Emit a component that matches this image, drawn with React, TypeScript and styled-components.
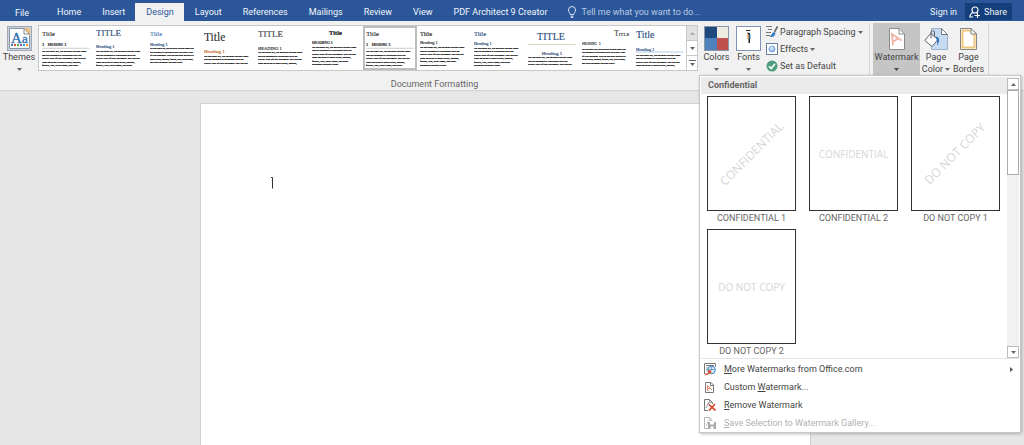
import React from "react";
import styled, { createGlobalStyle, css } from "styled-components";

const GlobalStyle = createGlobalStyle`
  * { box-sizing: border-box; }
  html, body, #root { height: 100%; }
  body {
    margin: 0;
    background: #e6e6e6;
    font-family: Roboto, "Open Sans", sans-serif;
    font-size: 9px;
    line-height: 12px;
    color: #444;
  }
  button { font: inherit; color: inherit; background: none; border: 0; padding: 0; margin: 0; }
  svg { display: block; flex: none; }
`;

const Window = styled.div`
  display: flex;
  flex-direction: column;
  min-height: 100%;
`;

/* ---------- tab strip ---------- */

const TabStrip = styled.nav`
  display: flex;
  align-items: flex-end;
  height: 21px;
  padding-right: 12px;
  background: #2b579a;
  color: #f2f5fa;
`;

const Tab = styled.button<{ $active?: boolean }>`
  height: 18px;
  padding: 0 10px 1px 11px;
  white-space: nowrap;
  ${(p) => p.$active && css`
    background: #f1f1f1;
    color: #2b579a;
  `}
`;

const FileTab = styled(Tab)`
  width: 46px;
  padding: 1px 2px 0 0;
`;

const TellMe = styled.label`
  display: flex;
  flex: 1;
  align-items: center;
  gap: 4px;
  height: 18px;
  padding: 0 0 1px 10px;
  color: #b9c9e2;
`;

const TellMeInput = styled.input`
  flex: 1;
  min-width: 0;
  padding: 0;
  border: 0;
  outline: 0;
  background: none;
  font: inherit;
  color: inherit;
  &::placeholder { color: #b9c9e2; opacity: 1; }
`;

const ShareButton = styled.button`
  display: flex;
  align-items: center;
  align-self: flex-end;
  gap: 3px;
  height: 17px;
  margin-bottom: 1px;
  padding: 0 5px 0 4px;
  background: #143f7a;
`;

const SignIn = styled(Tab)`
  padding: 0 8px 1px;
`;

/* ---------- ribbon ---------- */

const Ribbon = styled.header`
  position: relative;
  display: flex;
  height: 70px;
  background: #f1f1f1;
  border-bottom: 1px solid #d2d2d2;
`;

const RibbonGroup = styled.section<{ $grow?: boolean }>`
  display: flex;
  flex-direction: column;
  flex: ${(p) => (p.$grow ? "1" : "none")};
  min-width: 0;
  padding-top: 2px;
`;

const GroupBody = styled.div`
  display: flex;
  flex: none;
  align-items: flex-start;
  height: 54px;
`;

const GroupLabel = styled.div`
  line-height: 14px;
  text-align: center;
  color: #666;
`;

const Divider = styled.div`
  width: 1px;
  height: 54px;
  margin-top: 2px;
  background: #d6d6d6;
`;

const BigButton = styled.button<{ $width: number; $pressed?: boolean }>`
  display: flex;
  flex-direction: column;
  align-items: center;
  flex: none;
  width: ${(p) => p.$width}px;
  height: 52px;
  padding-top: 3px;
  line-height: 12px;
  white-space: nowrap;
  background: ${(p) => (p.$pressed ? "#c5c5c5" : "transparent")};
`;

const Spacer = styled.div<{ $width: number }>`
  flex: none;
  width: ${(p) => p.$width}px;
`;

const IconSlot = styled.span`
  display: flex;
  align-items: center;
  height: 25px;
`;

const ArrowBox = styled.span`
  margin-top: 5px;
`;

const SmallButton = styled.button`
  display: flex;
  align-items: center;
  gap: 2px;
  height: 17px;
  white-space: nowrap;
`;

const SmallColumn = styled.div`
  display: flex;
  flex-direction: column;
  width: 107px;
  padding-left: 4px;
`;

const Gallery = styled.div`
  display: flex;
  flex: 1;
  min-width: 0;
  height: 46px;
  margin-top: 2px;
  border: 1px solid #c8c8c8;
  background: #fff;
`;

const GalleryItems = styled.div`
  display: flex;
  flex: 1;
  min-width: 0;
  overflow: hidden;
`;

const StyleThumb = styled.button<{ $selected?: boolean }>`
  display: flex;
  align-items: flex-start;
  flex: none;
  width: 54px;
  height: 44px;
  padding: 0 0 0 1px;
  border: 2px solid ${(p) => (p.$selected ? "#bdbdbd" : "transparent")};
  overflow: hidden;
`;

const GalleryScroll = styled.div`
  display: flex;
  flex-direction: column;
  flex: none;
  width: 11px;
  border-left: 1px solid #c8c8c8;
`;

const ScrollButton = styled.button<{ $muted?: boolean }>`
  display: grid;
  flex: 1;
  place-items: center;
  background: ${(p) => (p.$muted ? "#e1e1e1" : "#fff")};
  & + & { border-top: 1px solid #c8c8c8; }
`;

/* ---------- watermark menu ---------- */

const Menu = styled.div`
  position: absolute;
  z-index: 2;
  top: 54px;
  right: 3px;
  width: 322px;
  padding: 1px 1px 0;
  background: #fff;
  border: 1px solid #c6c6c6;
  box-shadow: 1px 1px 3px rgba(0, 0, 0, 0.25);
`;

const MenuGallery = styled.div`
  display: flex;
  height: 281px;
`;

const MenuScrollArea = styled.div`
  flex: 1;
  overflow: hidden;
`;

const MenuHeading = styled.h2`
  margin: 0;
  padding-left: 7px;
  font-size: 9px;
  line-height: 17px;
  font-weight: 700;
  color: #666;
  background: #ebebeb;
`;

const CardGrid = styled.div`
  display: grid;
  grid-template-columns: repeat(3, 89px);
  gap: 4px 13px;
  padding: 2px 6px;
`;

const Card = styled.button`
  display: flex;
  flex-direction: column;
  align-items: center;
  line-height: 14px;
  white-space: nowrap;
  color: #666;
`;

const Sheet = styled.span`
  display: grid;
  place-items: center;
  width: 89px;
  height: 115px;
  border: 1px solid #333;
  background: #fff;
`;

const Mark = styled.span<{ $size: number; $diagonal?: boolean }>`
  font-family: "Open Sans", sans-serif;
  font-size: ${(p) => p.$size}px;
  line-height: 16px;
  color: #d6d6d6;
  transform: ${(p) => (p.$diagonal ? "rotate(-45deg)" : "none")};
`;

const ScrollBar = styled.div`
  display: flex;
  flex-direction: column;
  width: 12px;
  padding-top: 1px;
  background: #f1f1f1;
`;

const ScrollEnd = styled.button`
  display: grid;
  place-items: center;
  height: 12px;
  border: 1px solid #bcbcbc;
  background: #fff;
`;

const ScrollThumb = styled.div`
  height: 85px;
  border: 1px solid #ababab;
  background: #fff;
`;

const ScrollTrack = styled.div`
  flex: 1;
`;

const MenuList = styled.div`
  padding: 1px 0 0;
  border-top: 1px solid #e6e6e6;
`;

const MenuItem = styled.button<{ $disabled?: boolean }>`
  display: flex;
  align-items: center;
  gap: 8px;
  width: 100%;
  height: 18px;
  padding: 0 6px 0 3px;
  color: ${(p) => (p.$disabled ? "#b1b1b1" : "#444")};
`;

const MenuText = styled.span`
  flex: 1;
  text-align: left;
`;

/* ---------- document ---------- */

const Workspace = styled.main`
  display: flex;
  flex: 1;
  justify-content: center;
  padding: 12px 14px 0 0;
`;

const Paper = styled.article`
  width: 64%;
  max-width: 611px;
  padding: 72px 70px;
  background: #fff;
  border: 1px solid #d0d0d0;
  border-bottom: 0;
`;

/* ---------- drawings ---------- */

const Arrow = ({ color = "#666" }: { color?: string }) => (
  <svg width="5" height="3" viewBox="0 0 5 3"><path d="M0 0H5L2.500 3Z" fill={color} /></svg>
);

const InlineArrow = styled.span`
  display: inline-block;
  margin-left: 2px;
  vertical-align: middle;
`;

const BulbIcon = () => (
  <svg width="10" height="12" viewBox="0 0 10 12" fill="none" stroke="#dbe4f2" strokeWidth="1">
    <path d="M3.200 8.500C3.200 6.800 1.500 6.300 1.500 4A3.500 3.500 0 0 1 8.500 4C8.500 6.300 6.800 6.800 6.800 8.500Z" />
    <path d="M3.500 10.200H6.500M4 11.500H6" />
  </svg>
);

const PersonIcon = () => (
  <svg width="12" height="12" viewBox="0 0 12 12" fill="none" stroke="#fff" strokeWidth="1.100">
    <circle cx="6" cy="4" r="3" />
    <path d="M4 6.500C2 7.300 1 8.800 .8 11H4M7.500 6.800L8 7.200M5.500 9.500H11M8.500 7V12" />
  </svg>
);

const ThemesIcon = () => (
  <svg width="25" height="25" viewBox="0 0 25 25">
    <rect x=".5" y=".5" width="24" height="24" fill="#c9d3e0" stroke="#a3a9b2" />
    <path d="M2.500 2.500H17L22.500 8V22.500H2.500Z" fill="#fff" stroke="#8795a8" />
    <path d="M16 2H23V10Z" fill="#f0c47c" />
    <path d="M17 2.500V8H22.500Z" fill="#fff" stroke="#6f6f6f" strokeWidth=".8" />
    <text x="4" y="17" fontFamily="Liberation Serif, serif" fontSize="15" fill="#2f6db0" stroke="#2f6db0" strokeWidth=".3">A</text>
    <text x="15" y="17" fontFamily="Liberation Serif, serif" fontSize="13" fill="#2f6db0" stroke="#2f6db0" strokeWidth=".3">a</text>
    <rect x="4" y="18" width="2" height="2" fill="#3b76b8" />
    <rect x="7" y="18" width="2" height="2" fill="#e0552f" />
    <rect x="10" y="18" width="2" height="2" fill="#58a65c" />
    <rect x="13" y="18" width="2" height="2" fill="#8a58b0" />
    <rect x="16" y="18" width="2" height="2" fill="#2fa3c4" />
    <rect x="19" y="18" width="2" height="2" fill="#f09a35" />
  </svg>
);

const ColorsIcon = () => (
  <svg width="25" height="25" viewBox="0 0 25 25">
    <path d="M0 0H13V12H0Z" fill="#1f497d" />
    <path d="M13 0H25V12H13Z" fill="#eeece1" />
    <path d="M0 12H13V25H0Z" fill="#4f81bd" />
    <path d="M13 12H25V25H13Z" fill="#c0504d" />
    <rect x=".5" y=".5" width="24" height="24" fill="none" stroke="#8a97a8" />
  </svg>
);

const FontsIcon = () => (
  <svg width="25" height="25" viewBox="0 0 25 25">
    <rect x=".5" y=".5" width="24" height="24" fill="#fff" stroke="#7f93b2" />
    <path d="M10 4.500H14.500" stroke="#333" />
    <path d="M11 6.500L14 7V17H12.500V9Z" fill="#222" />
    <path d="M12 8V13" stroke="#e08a2c" />
    <path d="M14 8V13" stroke="#3a87c8" />
  </svg>
);

const ParagraphIcon = () => (
  <svg width="12" height="13" viewBox="0 0 12 13">
    <path d="M0 1.500H6M2 4.500H6M0 7.500H5M0 10.500H4" stroke="#777" />
    <path d="M11.500 1.500L8.500 7" stroke="#666" strokeWidth="1.600" />
    <path d="M8.500 7C6 7 6 10 3.500 11.500C6.500 13 9.800 11 9.300 8Z" fill="#3d7fc0" />
  </svg>
);

const EffectsIcon = () => (
  <svg width="12" height="12" viewBox="0 0 12 12">
    <rect x=".5" y=".5" width="11" height="11" fill="#fff" stroke="#6b7f9e" />
    <circle cx="6" cy="6" r="3" fill="#a9c7ee" stroke="#5b8fd0" strokeWidth=".8" />
    <circle cx="5.500" cy="5" r="1.400" fill="#dceaff" />
  </svg>
);

const CheckIcon = () => (
  <svg width="12" height="12" viewBox="0 0 12 12">
    <circle cx="6" cy="6" r="5.500" fill="#4f9c7f" />
    <path d="M3 6.200L5.200 8.500L9 3.800" fill="none" stroke="#fff" strokeWidth="1.600" />
  </svg>
);

const WatermarkIcon = () => (
  <svg width="17" height="22" viewBox="0 0 17 22">
    <path d="M1.500 .5H11L16.500 6V21.500H1.500Z" fill="#fff" stroke="#8a8a8a" />
    <path d="M11 .5V6H16.500" fill="none" stroke="#8a8a8a" />
    <path d="M5 17.500L4 6L13.500 12.500M4.800 14L10 10.500" fill="none" stroke="#efb3a3" strokeWidth="1.800" />
  </svg>
);

const PageColorIcon = () => (
  <svg width="24" height="22" viewBox="0 0 24 22">
    <path d="M7.500 .5H17.500L23.500 6.500V21.500H7.500Z" fill="#c5dbf1" stroke="#9eb4cc" />
    <path d="M17.500 .5V6.500H23.500Z" fill="#fff" stroke="#777" />
    <path d="M6.500 5.500L14 11.500L8 18.500L.8 12.500Z" fill="#fff" stroke="#666" />
    <path d="M7 10.500V4A1.800 1.800 0 0 1 10.500 4V9" fill="none" stroke="#666" />
    <path d="M11.500 8.500C15.500 8.500 16.500 12 13.500 17.500C13 15 13.500 13 11.500 8.500Z" fill="#3a7cc0" />
  </svg>
);

const BordersIcon = () => (
  <svg width="17" height="22" viewBox="0 0 17 22">
    <path d="M.5 .5H11L16.500 6V21.500H.5Z" fill="#fff" stroke="#858585" />
    <path d="M2.500 2.500H10.500L14.500 7V19.500H2.500Z" fill="#fff" stroke="#f1c879" strokeWidth="2" />
    <path d="M11 .5V6H16.500Z" fill="#fff" stroke="#858585" />
  </svg>
);

const OnlineIcon = () => (
  <svg width="12" height="12" viewBox="0 0 12 12">
    <path d="M.5 11V.5H11.500V4M2 2.500H10" fill="none" stroke="#777" />
    <path d="M2 5H4M2 7H3.500" stroke="#999" />
    <circle cx="7.500" cy="7" r="3.800" fill="#d8e8f8" stroke="#3f83c8" />
    <path d="M4 6.500H11M7.500 3.500V7" stroke="#6fa3d8" />
    <path d="M1 11.500C3.500 11.500 5 10.500 6 8.500M3.800 8H6.500V10.800" fill="none" stroke="#dc5430" strokeWidth="1.500" />
  </svg>
);

const CustomIcon = () => (
  <svg width="12" height="12" viewBox="0 0 12 12">
    <path d="M1.500 1.500H7L9.500 4V11.500H1.500Z" fill="#fff" stroke="#777" />
    <path d="M6.500 1.500V4.500H9.500" fill="none" stroke="#777" />
    <path d="M3.500 10V4.500L8 9M3.500 8L6 7" fill="none" stroke="#e8836a" />
  </svg>
);

const RemoveIcon = () => (
  <svg width="12" height="12" viewBox="0 0 12 12">
    <path d="M4 11.500H.5V.5H5.500L8.500 3.500V5" fill="#fff" stroke="#777" />
    <path d="M5.500 .5V3.500H8.500M2 9L4.500 3.500L5 6" fill="none" stroke="#999" />
    <path d="M5 5.500L11.500 11.500M11 5L5 11.500" stroke="#d9482b" strokeWidth="1.700" />
  </svg>
);

const SaveIcon = () => (
  <svg width="12" height="12" viewBox="0 0 12 12">
    <path d="M4 11.500H.5V.5H5.500L8.500 3.500" fill="#fff" stroke="#b5b5b5" />
    <path d="M5.500 .5V3.500H8.500M2 9L4.500 3.500" fill="none" stroke="#c4c4c4" />
    <path d="M4 5H12V12H4Z" fill="#a9a9a9" />
    <path d="M6 5H10V7.500H6ZM6.500 9.500H9.500V12H6.500Z" fill="#fff" />
  </svg>
);

const Caret = () => (
  <svg width="4" height="13" viewBox="0 0 4 13">
    <path d="M0 1.500H1.500V12.500" fill="none" stroke="#333" />
  </svg>
);

/* ---------- style set previews ---------- */

const wide = [
  "On the Insert tab, the galleries include items",
  "that are designed to coordinate with the",
  "overall look of your document. You can use",
  "these galleries to insert tables, headers,",
  "footers, lists, cover pages, and other",
  "document building blocks.",
];
const compact = [
  "On the Insert tab, the galleries include items that",
  "are designed to coordinate with the overall look",
  "of your document. You can use these galleries to",
  "insert tables, headers, footers, lists, cover pages,",
  "and other document building blocks.",
];

type Line = { text: string; x?: number; y: number; size: number; color: string; anchor?: "start" | "middle" | "end"; bold?: boolean; caps?: boolean };
type Preview = { title: Line; heading: Line; body: { y: number; size: number; lines: string[] }; rule?: { y: number; color: string }; selected?: boolean };

const navy = "#2d4f80";
const blue = "#4f7db8";
const ink = "#333";
const bodyStep = 14;
const bodyLimit = 153;

const classic: Preview = {
  title: { text: "Title", y: 31, size: 28, color: ink },
  heading: { text: "1   Heading 1", y: 71, size: 18, color: ink, bold: true, caps: true },
  rule: { y: 81, color: "#bbb" },
  body: { y: 96, size: 10, lines: wide },
};

const previews: Preview[] = [
  classic,
  { title: { text: "TITLE", y: 33, size: 36, color: navy }, heading: { text: "Heading 1", y: 80, size: 18, color: navy }, body: { y: 96, size: 10, lines: wide } },
  { title: { text: "Title", y: 31, size: 26, color: blue }, heading: { text: "Heading 1", y: 70, size: 17, color: navy }, body: { y: 84, size: 9, lines: compact } },
  { title: { text: "Title", y: 52, size: 46, color: ink }, heading: { text: "Heading 1", y: 100, size: 20, color: "#c9692b" }, body: { y: 114, size: 10, lines: wide } },
  { title: { text: "TITLE", y: 37, size: 36, color: "#444" }, heading: { text: "HEADING 1", y: 86, size: 18, color: ink }, body: { y: 100, size: 10, lines: wide } },
  { title: { text: "Title", x: 94, y: 28, size: 26, color: "#111", anchor: "middle", bold: true }, heading: { text: "HEADING 1", y: 63, size: 15, color: ink, bold: true }, body: { y: 78, size: 10, lines: wide } },
  { ...classic, selected: true },
  { title: { text: "Title", y: 31, size: 26, color: "#222" }, heading: { text: "Heading 1", y: 65, size: 17, color: ink }, body: { y: 80, size: 10, lines: wide } },
  { title: { text: "Title", y: 31, size: 26, color: navy }, heading: { text: "Heading 1", y: 68, size: 17, color: navy }, body: { y: 82, size: 10, lines: wide } },
  { title: { text: "TITLE", x: 92, y: 49, size: 40, color: navy, anchor: "middle" }, heading: { text: "Heading 1", x: 96, y: 107, size: 20, color: navy, anchor: "middle" }, rule: { y: 66, color: "#c3cf9b" }, body: { y: 121, size: 10, lines: wide } },
  { title: { text: "Title", x: 190, y: 32, size: 29, color: "#444", anchor: "end", caps: true }, heading: { text: "Heading  1", y: 67, size: 17, color: "#444", caps: true }, body: { y: 86, size: 9, lines: compact } },
  { title: { text: "Title", y: 41, size: 40, color: navy }, heading: { text: "Heading 1", y: 90, size: 18, color: navy }, rule: { y: 96, color: "#9db8dc" }, body: { y: 110, size: 10, lines: wide } },
];

const ThumbText = ({ line }: { line: Line }) => (
  <text
    x={line.x ?? 0}
    y={line.y}
    fontSize={line.size}
    fill={line.color}
    stroke={line.color}
    strokeWidth=".6"
    textAnchor={line.anchor}
    fontWeight={line.bold ? 700 : 400}
    fontVariant={line.caps ? "small-caps" : undefined}
    xmlSpace="preserve"
  >
    {line.text}
  </text>
);

const ThumbArt = ({ p }: { p: Preview }) => (
  <svg width="49" height="40" viewBox="0 0 196 160" fontFamily="Liberation Serif, serif">
    <ThumbText line={p.title} />
    <ThumbText line={p.heading} />
    {p.rule && <path d={`M0 ${p.rule.y}H190`} stroke={p.rule.color} strokeWidth="3" />}
    {p.body.lines
      .filter((_, i) => p.body.y + i * bodyStep <= bodyLimit)
      .map((l, i) => (
        <text key={l} x="0" y={p.body.y + i * bodyStep} fontSize={p.body.size} fill="#111" stroke="#111" strokeWidth=".8">{l}</text>
      ))}
  </svg>
);

const leftTabs = ["Home", "Insert", "Design", "Layout", "References", "Mailings", "Review", "View", "PDF Architect 9 Creator"];

const cards = [
  { mark: "CONFIDENTIAL", label: "CONFIDENTIAL 1", size: 12, diagonal: true },
  { mark: "CONFIDENTIAL", label: "CONFIDENTIAL 2", size: 10, diagonal: false },
  { mark: "DO NOT COPY", label: "DO NOT COPY 1", size: 12, diagonal: true },
  { mark: "DO NOT COPY", label: "DO NOT COPY 2", size: 10, diagonal: false },
];

export default function App() {
  return (
    <Window>
      <GlobalStyle />
      <TabStrip>
        <FileTab>File</FileTab>
        {leftTabs.map((t) => <Tab key={t} $active={t === "Design"}>{t}</Tab>)}
        <TellMe>
          <BulbIcon />
          <TellMeInput aria-label="Tell me" placeholder="Tell me what you want to do..." />
        </TellMe>
        <SignIn>Sign in</SignIn>
        <ShareButton><PersonIcon />Share</ShareButton>
      </TabStrip>

      <Ribbon>
        <RibbonGroup $grow>
          <GroupBody>
            <BigButton $width={38}>
              <IconSlot><ThemesIcon /></IconSlot>
              <span>Themes</span>
              <ArrowBox><Arrow /></ArrowBox>
            </BigButton>
            <Gallery>
              <GalleryItems>
                {previews.map((p, i) => (
                  <StyleThumb key={i} $selected={p.selected} aria-label={`Style set ${i + 1}`}>
                    <ThumbArt p={p} />
                  </StyleThumb>
                ))}
              </GalleryItems>
              <GalleryScroll>
                <ScrollButton $muted aria-label="Previous row"><svg width="5" height="3" viewBox="0 0 5 3"><path d="M0 3H5L2.500 0Z" fill="#aaa" /></svg></ScrollButton>
                <ScrollButton aria-label="Next row"><Arrow /></ScrollButton>
                <ScrollButton aria-label="More"><svg width="7" height="6" viewBox="0 0 7 6"><path d="M0 .5H7" stroke="#666" /><path d="M1 3H6L3.500 6Z" fill="#666" /></svg></ScrollButton>
              </GalleryScroll>
            </Gallery>
            <BigButton $width={37}>
              <IconSlot><ColorsIcon /></IconSlot>
              <span>Colors</span>
              <ArrowBox><Arrow /></ArrowBox>
            </BigButton>
            <BigButton $width={27}>
              <IconSlot><FontsIcon /></IconSlot>
              <span>Fonts</span>
              <ArrowBox><Arrow /></ArrowBox>
            </BigButton>
            <SmallColumn>
              <SmallButton><ParagraphIcon /><span>Paragraph Spacing<InlineArrow><Arrow /></InlineArrow></span></SmallButton>
              <SmallButton><EffectsIcon /><span>Effects<InlineArrow><Arrow /></InlineArrow></span></SmallButton>
              <SmallButton><CheckIcon /><span>Set as Default</span></SmallButton>
            </SmallColumn>
          </GroupBody>
          <GroupLabel>Document Formatting</GroupLabel>
        </RibbonGroup>
        <Divider />
        <RibbonGroup>
          <GroupBody>
            <Spacer $width={3} />
            <BigButton $width={47} $pressed>
              <IconSlot><WatermarkIcon /></IconSlot>
              <span>Watermark</span>
              <ArrowBox><Arrow color="#444" /></ArrowBox>
            </BigButton>
            <BigButton $width={32}>
              <IconSlot><PageColorIcon /></IconSlot>
              <span>Page</span>
              <span>Color<InlineArrow><Arrow /></InlineArrow></span>
            </BigButton>
            <BigButton $width={33}>
              <IconSlot><BordersIcon /></IconSlot>
              <span>Page</span>
              <span>Borders</span>
            </BigButton>
            <Spacer $width={3} />
          </GroupBody>
        </RibbonGroup>
        <Divider />
        <Spacer $width={35} />

        <Menu role="menu">
          <MenuGallery>
            <MenuScrollArea>
              <MenuHeading>Confidential</MenuHeading>
              <CardGrid>
                {cards.map((c) => (
                  <Card key={c.label}>
                    <Sheet><Mark $size={c.size} $diagonal={c.diagonal}>{c.mark}</Mark></Sheet>
                    {c.label}
                  </Card>
                ))}
              </CardGrid>
            </MenuScrollArea>
            <ScrollBar>
              <ScrollEnd aria-label="Scroll up"><svg width="5" height="3" viewBox="0 0 5 3"><path d="M0 3H5L2.500 0Z" fill="#666" /></svg></ScrollEnd>
              <ScrollThumb />
              <ScrollTrack />
              <ScrollEnd aria-label="Scroll down"><Arrow /></ScrollEnd>
            </ScrollBar>
          </MenuGallery>
          <MenuList>
            <MenuItem>
              <OnlineIcon />
              <MenuText><u>M</u>ore Watermarks from Office.com</MenuText>
              <svg width="3" height="5" viewBox="0 0 3 5"><path d="M0 0V5L3 2.500Z" fill="#555" /></svg>
            </MenuItem>
            <MenuItem><CustomIcon /><MenuText>Custom <u>W</u>atermark...</MenuText></MenuItem>
            <MenuItem><RemoveIcon /><MenuText><u>R</u>emove Watermark</MenuText></MenuItem>
            <MenuItem $disabled disabled><SaveIcon /><MenuText><u>S</u>ave Selection to Watermark Gallery...</MenuText></MenuItem>
          </MenuList>
        </Menu>
      </Ribbon>

      <Workspace>
        <Paper><Caret /></Paper>
      </Workspace>
    </Window>
  );
}
